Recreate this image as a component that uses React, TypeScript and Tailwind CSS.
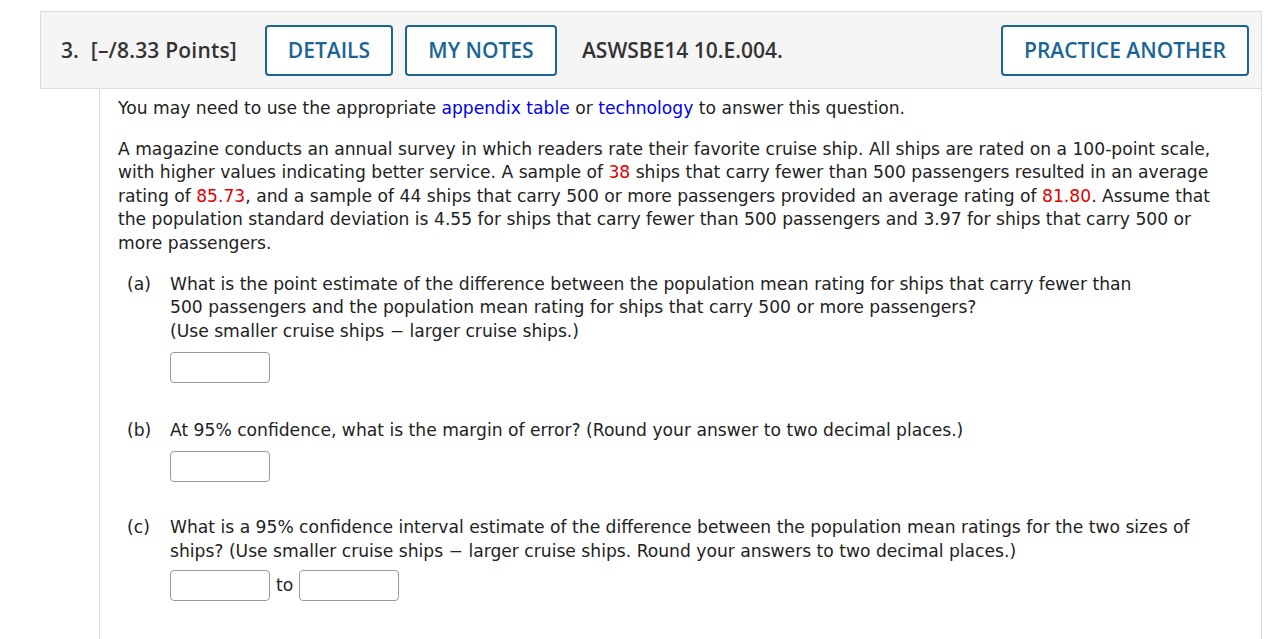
import React from 'react';

const body = "font-['DejaVu_Sans',Verdana,sans-serif]";

function HeaderButton({ label, width }: { label: string; width: string }) {
  return (
    <button
      className={`h-[51px] ${width} rounded-[4px] border-2 border-[#1a6496] bg-white text-[21px] font-semibold text-[#1a6496] font-['Open_Sans',sans-serif]`}
    >
      {label}
    </button>
  );
}

function AnswerBox() {
  return <span className="inline-block h-[31px] w-[100px] rounded-[4px] border border-[#9a9a9a] bg-white" />;
}

function Part({ letter, children }: { letter: string; children: React.ReactNode }) {
  return (
    <div className="flex">
      <div className="w-[52px] shrink-0 pl-[9px]">({letter})</div>
      <div className="flex-1">{children}</div>
    </div>
  );
}

const Red = ({ children }: { children: React.ReactNode }) => <span className="text-[#e00000]">{children}</span>;

export default function App() {
  return (
    <div className="min-h-[639px] bg-white pt-[11px] pl-[40px] pr-[22px]">
      <div className="flex h-[78px] items-center border border-[#dcdcdc] bg-[#f5f5f5] pl-[20px] pr-[12px] pt-[1px] font-['Open_Sans',sans-serif] text-[21px] font-semibold text-[#333]">
        <span>3.</span>
        <span className="ml-[12px] tracking-[0.2px]">[–/8.33 Points]</span>
        <div className="ml-[28px] flex gap-[12px]">
          <HeaderButton label="DETAILS" width="w-[128px]" />
          <HeaderButton label="MY NOTES" width="w-[152px]" />
        </div>
        <span className="ml-[25px]">ASWSBE14 10.E.004.</span>
        <div className="ml-auto">
          <HeaderButton label="PRACTICE ANOTHER" width="w-[248px]" />
        </div>
      </div>
      <div
        className={`ml-[59px] min-h-[550px] border-x border-[#dcdcdc] pl-[18px] pr-[30px] pt-[8px] text-[17.15px] leading-[23.6px] text-[#222] ${body}`}
      >
        <p>
          You may need to use the appropriate <span className="text-[#0000ee]">appendix table</span> or{' '}
          <span className="text-[#0000ee]">technology</span> to answer this question.
        </p>
        <p className="mt-[17px]">
          A magazine conducts an annual survey in which readers rate their favorite cruise ship. All ships are rated on a
          100-point scale, with higher values indicating better service. A sample of <Red>38</Red> ships that carry fewer
          than 500 passengers resulted in an average rating of <Red>85.73</Red>, and a sample of 44 ships that carry 500 or
          more passengers provided an average rating of <Red>81.80</Red>. Assume that the population standard deviation is
          4.55 for ships that carry fewer than 500 passengers and 3.97 for ships that carry 500 or more passengers.
        </p>
        <div className="mt-[17px]">
          <Part letter="a">
            <p className="max-w-[970px]">
              What is the point estimate of the difference between the population mean rating for ships that carry fewer
              than 500 passengers and the population mean rating for ships that carry 500 or more passengers?
              <br />
              (Use smaller cruise ships − larger cruise ships.)
            </p>
            <div className="mt-[9px] flex">
              <AnswerBox />
            </div>
          </Part>
        </div>
        <div className="mt-[36px]">
          <Part letter="b">
            <p>At 95% confidence, what is the margin of error? (Round your answer to two decimal places.)</p>
            <div className="mt-[8px] flex">
              <AnswerBox />
            </div>
          </Part>
        </div>
        <div className="mt-[34px]">
          <Part letter="c">
            <p className="max-w-[1030px]">
              What is a 95% confidence interval estimate of the difference between the population mean ratings for the two
              sizes of ships? (Use smaller cruise ships − larger cruise ships. Round your answers to two decimal places.)
            </p>
            <div className="mt-[7px] flex items-center gap-[6px]">
              <AnswerBox />
              <span>to</span>
              <AnswerBox />
            </div>
          </Part>
        </div>
      </div>
    </div>
  );
}
